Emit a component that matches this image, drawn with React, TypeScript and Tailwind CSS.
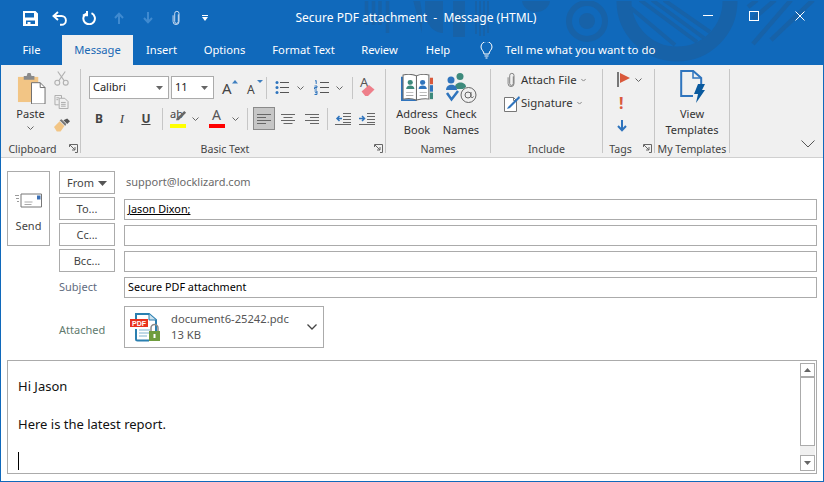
import React from "react";

const tabs = [
  { label: "File", w: "w-[61px]" },
  { label: "Message", w: "w-[71px]", active: true },
  { label: "Insert", w: "w-[57px]" },
  { label: "Options", w: "w-[69px]" },
  { label: "Format Text", w: "w-[89px]" },
  { label: "Review", w: "w-[63px]" },
  { label: "Help", w: "w-[54px]" },
];

function TitleDecor() {
  return (
    <svg className="absolute left-0 top-0 pointer-events-none" width="824" height="65" viewBox="0 0 824 65" fill="none" stroke="#1762a8">
      <g strokeWidth="3.500">
        <path d="M366.500 0v25M373.500 0v25M380 0v25M387.500 0v33" />
      </g>
      <path d="M413 0h7l2 12v21z" fill="#1762a8" stroke="none" />
      <path d="M425 0h18v33c-10 0-18-10-18-22z" fill="#1762a8" stroke="none" />
      <path d="M453 0h12v37h-12z" fill="#1762a8" stroke="none" />
      <g strokeWidth="2">
        <path d="M476 0v34M480 0v36M484 0v36M488 0v33" />
      </g>
      <path d="M522 0h28a14 12 0 0 1-28 0z" fill="#1762a8" stroke="none" />
      <circle cx="587" cy="21" r="18" strokeWidth="6" />
      <circle cx="587" cy="21" r="8" fill="#1762a8" stroke="none" />
      <circle cx="677" cy="1" r="53" strokeWidth="15" />
      <g strokeWidth="4">
        <path d="M631 8l44 37M640 0l57 42M652 0l52 38M664 0l46 32" />
      </g>
      <g strokeWidth="4.500">
        <path d="M757 0l-9 7M775 0l-22 19M791 0l-38 44M813 0l-42 40" />
      </g>
    </svg>
  );
}

function SaveIcon() {
  return (
    <svg width="15" height="15" viewBox="0 0 15 15">
      <path
        fillRule="evenodd"
        fill="#fff"
        d="M0 0h12.500L15 2.500V15H0zM2 2v4.500h9V2zM3 9.500V13h1.500V11h3v2H12V9.500z"
      />
    </svg>
  );
}

function UndoIcon() {
  return (
    <svg width="15" height="15" viewBox="0 0 15 15" fill="none" stroke="#fff" strokeWidth="1.900">
      <path d="M6 1L1.500 5 6 9" />
      <path d="M2 5h7.500a4.200 4.200 0 0 1 0 8.800H8" />
    </svg>
  );
}

function RedoIcon() {
  return (
    <svg width="14" height="14" viewBox="0 0 14 14" fill="none" stroke="#fff" strokeWidth="2">
      <path d="M9.500 2.200A5.800 5.800 0 1 1 4 2.600" />
      <path d="M5 0v4.200H0.800" />
    </svg>
  );
}

function ArrowIcon({ down, color = "#3f8ad0" }: { down?: boolean; color?: string }) {
  return (
    <svg width="10" height="12" viewBox="0 0 10 12" fill="none" stroke={color} strokeWidth="2" className={down ? "rotate-180" : ""}>
      <path d="M5 12V2M1 6l4-4.300L9 6" />
    </svg>
  );
}

function ClipIcon({ color = "#dbe7f5" }: { color?: string }) {
  return (
    <svg width="9" height="16" viewBox="0 0 10 16" fill="none" stroke={color} strokeWidth="1">
      <path d="M7 4v8a2 2 0 0 1-4 0V3a2.200 2.200 0 0 1 4.800 0v9a3.300 3.300 0 0 1-6.600 0V5" />
    </svg>
  );
}

function Chevron({ color = "#666", className = "" }: { color?: string; className?: string }) {
  return (
    <svg width="7" height="4" viewBox="0 0 7 4" fill="none" stroke={color} strokeWidth="1" className={className}>
      <path d="M0.500 0.500l3 3 3-3" />
    </svg>
  );
}

function PasteIcon() {
  return (
    <svg width="29" height="31" viewBox="0 0 30 32" className="ml-[2px]">
      <path d="M1 4h21v26H1z" fill="#f2c585" />
      <path d="M7 3h3l1-3h3l1 3h3v4H7z" fill="#8a8a8a" />
      <path d="M15 10h9l5 5v17H15z" fill="#fff" stroke="#6d6d6d" />
      <path d="M24 10v5h5" fill="none" stroke="#6d6d6d" />
    </svg>
  );
}

function ScissorsIcon() {
  return (
    <svg width="15" height="15" viewBox="0 0 16 16" fill="none" stroke="#b0b0b0" strokeWidth="1.200">
      <circle cx="3.500" cy="12.500" r="2.600" />
      <circle cx="12.500" cy="12.500" r="2.600" />
      <path d="M5 10.500L12 0.500M11 10.500L4 0.500" />
    </svg>
  );
}

function CopyIcon() {
  return (
    <svg width="15" height="14" viewBox="0 0 16 15" fill="none" stroke="#a8a8a8">
      <path d="M1 .5h7v3M1 .5v10h4" />
      <path d="M5.500 3.500h6l3.500 3.500v7.500H5.500z" fill="#f0f0f0" />
      <path d="M7.500 8h5M7.500 10h5M7.500 12h5M2.500 3h3M2.500 5h2" />
    </svg>
  );
}

function BrushIcon() {
  return (
    <svg width="16" height="14" viewBox="0 0 17 14">
      <path d="M0 9l6-6 5 5-4 6H3z" fill="#f2c585" />
      <path d="M6 2l2-1 5 5-1 2z" fill="#777" />
      <path d="M10 2l4-2 3 3-3 3z" fill="#555" />
    </svg>
  );
}

function GrowFontIcon({ shrink }: { shrink?: boolean }) {
  return (
    <div className="relative w-[16px] h-[16px]">
      <span className={`absolute left-0 bottom-0 leading-none text-[#444] ${shrink ? "text-[12px]" : "text-[15px]"}`}>A</span>
      <svg className="absolute right-0 top-0" width="6" height="4" viewBox="0 0 6 4" fill="#3f7fbf">
        <path d={shrink ? "M0 0h6L3 3z" : "M0 3.500h6L3 0z"} />
      </svg>
    </div>
  );
}

function BulletsIcon() {
  return (
    <svg width="14" height="15" viewBox="0 0 14 15" fill="none" stroke="#555">
      <path d="M5 2.500h9M5 7.500h9M5 12.500h9" />
      <g fill="#2f74bd" stroke="none">
        <circle cx="2" cy="2.500" r="1.500" />
        <circle cx="2" cy="7.500" r="1.500" />
        <circle cx="2" cy="12.500" r="1.500" />
      </g>
    </svg>
  );
}

function NumbersIcon() {
  return (
    <svg width="15" height="15" viewBox="0 0 15 15" fill="none" stroke="#555">
      <path d="M6 2.500h9M6 7.500h9M6 12.500h9" />
      <path d="M1 1l1.200-.5V4M.5 6h2.500v1.500H.5V9H3M.5 11h2.500v3.500H.5M1 12.700h2" stroke="#2f74bd" />
    </svg>
  );
}

function EraserIcon() {
  return (
    <div className="relative w-[16px] h-[18px]">
      <span className="absolute left-0 top-[-3px] text-[13px] leading-none text-[#555]">A</span>
      <svg className="absolute left-[1px] top-[5px]" width="15" height="12" viewBox="0 0 15 13">
        <path d="M0 8l8-7 6 5-7 7H4z" fill="#ee7f8a" />
      </svg>
    </div>
  );
}

function HighlightIcon() {
  return (
    <div className="relative w-[17px] h-[18px]">
      <span className="absolute left-0 top-[-2px] text-[11px] leading-none text-[#444]">ab</span>
      <svg className="absolute left-[5px] top-0" width="12" height="12" viewBox="0 0 13 13">
        <path d="M2 9l8-8 2 2-8 8H1z" fill="#666" />
      </svg>
      <div className="absolute left-0 bottom-0 w-[16px] h-[4px] bg-[#ffff00]" />
    </div>
  );
}

function FontColorIcon() {
  return (
    <div className="relative w-[16px] h-[18px]">
      <span className="absolute left-[3px] top-[-2px] text-[14px] leading-none text-[#555]">A</span>
      <div className="absolute left-0 bottom-0 w-[16px] h-[4px] bg-[#ff0000]" />
    </div>
  );
}

function AlignIcon({ mode }: { mode: "left" | "center" | "right" }) {
  const d = {
    left: "M0 .5h14M0 3.500h9M0 6.500h14M0 9.500h9",
    center: "M0 .5h14M2.500 3.500h9M0 6.500h14M2.500 9.500h9",
    right: "M0 .5h14M5 3.500h9M0 6.500h14M5 9.500h9",
  }[mode];
  return (
    <svg width="14" height="10" viewBox="0 0 14 10" fill="none" stroke="#666">
      <path d={d} />
    </svg>
  );
}

function IndentIcon({ out }: { out?: boolean }) {
  return (
    <svg width="16" height="12" viewBox="0 0 16 12" fill="none">
      <path d="M8 .5h8M8 3.500h8M8 6.500h8M8 9.500h8M0 11.500h16" stroke="#666" />
      <path d={out ? "M7 5.500H2M4.500 3L2 5.500 4.500 8" : "M0 5.500h5M3 3l2.500 2.500L3 8"} stroke="#2f74bd" strokeWidth="1.500" />
    </svg>
  );
}

function AddressBookIcon() {
  return (
    <svg width="32" height="27" viewBox="0 0 31 29" preserveAspectRatio="none">
      <path d="M0 3h3v24h12v2H0z" fill="#2f74bd" />
      <path d="M2 1c4-1 9-1 13 1v26c-4-2-9-2-13-1z" fill="#fff" stroke="#6d6d6d" />
      <path d="M15 2c4-2 8-2 12-1v26c-4-1-8 0-12 1z" fill="#fff" stroke="#6d6d6d" />
      <path d="M28 4h3v7h-3z" fill="#d9593b" />
      <path d="M28 12h3v7h-3z" fill="#2f74bd" />
      <path d="M28 20h3v7h-3z" fill="#3d8a7c" />
      <circle cx="9" cy="9" r="2.500" fill="#3d8a7c" />
      <path d="M5 16c0-5 8-5 8 0z" fill="#3d8a7c" />
      <circle cx="21" cy="9" r="2.500" fill="#2f74bd" />
      <path d="M17 16c0-5 8-5 8 0z" fill="#2f74bd" />
      <path d="M5 20h7M5 23h7M18 20h7M18 23h7" stroke="#aaa" />
    </svg>
  );
}

function CheckNamesIcon() {
  return (
    <svg width="32" height="31" viewBox="0 0 32 31" className="-mt-[1px] -mb-[3px]">
      <circle cx="15" cy="3.500" r="3.500" fill="#3d8a7c" />
      <path d="M10 14c0-6 11-6 11 0l-3 2h-6z" fill="#3d8a7c" />
      <circle cx="6" cy="7" r="3.500" fill="#2f74bd" />
      <path d="M1 17c0-7 11-7 11 0z" fill="#2f74bd" />
      <path d="M2 20l4.500 6.500L13 18" fill="none" stroke="#2f74bd" strokeWidth="2.500" />
      <circle cx="23.500" cy="22" r="7.500" fill="#f0f0f0" stroke="#666" />
      <circle cx="23" cy="22" r="3" fill="none" stroke="#666" />
      <path d="M26 19v4.500c0 1.500 2 1.500 2.500 0" fill="none" stroke="#666" />
    </svg>
  );
}

function SignatureIcon() {
  return (
    <svg width="16" height="17" viewBox="0 0 16 17" fill="none">
      <path d="M.5 2.500h9l3 3v11H.5z" fill="#fff" stroke="#777" />
      <path d="M9.500 2.500v3h3" stroke="#777" />
      <path d="M4 12l8-8 3-3 1 2-10 10-3 1z" fill="#2f74bd" />
    </svg>
  );
}

function FlagIcon() {
  return (
    <svg width="13" height="15" viewBox="0 0 13 15">
      <path d="M0 0h2v15H0z" fill="#777" />
      <path d="M3 1l10 5-10 5z" fill="#d9593b" />
    </svg>
  );
}

function TemplatesIcon() {
  return (
    <svg width="25" height="33" viewBox="0 0 25 33" fill="none">
      <path d="M13 26H1.200V1h12l8 7v7" stroke="#2f74bd" strokeWidth="2" />
      <path d="M13 1v7h8" stroke="#2f74bd" strokeWidth="1.500" />
      <path d="M18 14h7l-3 6h3l-9 13 2-9h-4z" fill="#0a5a9e" />
    </svg>
  );
}

function LauncherIcon() {
  return (
    <svg width="9" height="9" viewBox="0 0 9 9" fill="none" stroke="#666">
      <path d="M.5 3V.5H8.500V8.500H6" />
      <path d="M1 1l5 5M6 3v3H3" />
    </svg>
  );
}

function GroupLabel({ children, launcher }: { children: React.ReactNode; launcher?: boolean }) {
  return (
    <div className={`relative h-[14px] flex items-center justify-center text-[10.6px] leading-none text-[#444] whitespace-nowrap ${launcher ? "pr-[16px]" : ""}`}>
      {children}
      {launcher && (
        <span className="absolute right-[2px] top-[2px]">
          <LauncherIcon />
        </span>
      )}
    </div>
  );
}

function Group({ w, label, launcher, children }: { w: string; label: string; launcher?: boolean; children: React.ReactNode }) {
  return (
    <div className={`${w} h-[84px] border-r border-[#c6c6c6] flex flex-col shrink-0`}>
      <div className="flex-1 min-h-0">{children}</div>
      <div className="-mt-[3px] mb-[-3px]">
        <GroupLabel launcher={launcher}>{label}</GroupLabel>
      </div>
    </div>
  );
}

function Sep({ h = "h-[22px]" }: { h?: string }) {
  return <div className={`w-px ${h} bg-[#c6c6c6] shrink-0`} />;
}

function Ribbon() {
  return (
    <div className="h-[93px] bg-[#f0f0f0] border-b border-[#d0d0d0] pt-[4px] flex relative">
      <Group w="w-[80px]" label="Clipboard" launcher>
        <div className="flex">
          <div className="w-[53px] flex flex-col items-center pt-[4px] pl-[6px]">
            <PasteIcon />
            <div className="text-[11px] leading-none mt-[4px] text-[#333]">Paste</div>
            <Chevron className="mt-[7px]" />
          </div>
          <div className="flex flex-col items-start gap-[9px] pt-[2px]">
            <ScissorsIcon />
            <CopyIcon />
            <BrushIcon />
          </div>
        </div>
      </Group>

      <Group w="w-[305px]" label="Basic Text" launcher>
        <div className="pl-[8px] pt-[7px]">
          <div className="flex items-center h-[23px]">
            <div className="w-[80px] h-[23px] border border-[#ababab] bg-white flex items-center justify-between pl-[3px] pr-[5px]">
              <span className="text-[11px] text-[#222]">Calibri</span>
              <svg width="7" height="4" viewBox="0 0 7 4" fill="#666"><path d="M0 0h7L3.500 4z" /></svg>
            </div>
            <div className="w-[43px] h-[23px] ml-[2px] border border-[#ababab] bg-white flex items-center justify-between pl-[3px] pr-[5px]">
              <span className="text-[11px] text-[#222]">11</span>
              <svg width="7" height="4" viewBox="0 0 7 4" fill="#666"><path d="M0 0h7L3.500 4z" /></svg>
            </div>
            <div className="ml-[8px]"><GrowFontIcon /></div>
            <div className="ml-[9px]"><GrowFontIcon shrink /></div>
            <div className="ml-[3px]"><Sep /></div>
            <div className="ml-[8px]"><BulletsIcon /></div>
            <Chevron className="ml-[8px]" />
            <div className="ml-[10px]"><NumbersIcon /></div>
            <Chevron className="ml-[7px]" />
            <div className="ml-[9px]"><Sep /></div>
            <div className="ml-[7px]"><EraserIcon /></div>
          </div>
          <div className="flex items-center h-[23px] mt-[8px]">
            <span className="w-[22px] ml-[-1px] text-center font-bold text-[12px] text-[#444]">B</span>
            <span className="w-[24px] text-center italic text-[13px] text-[#444] font-['Liberation_Serif',serif]">I</span>
            <span className="w-[24px] text-center underline text-[12px] font-bold text-[#444]">U</span>
            <div className="ml-[4px]"><Sep /></div>
            <div className="ml-[7px]"><HighlightIcon /></div>
            <Chevron className="ml-[5px]" />
            <div className="ml-[10px]"><FontColorIcon /></div>
            <Chevron className="ml-[7px]" />
            <div className="ml-[8px]"><Sep /></div>
            <div className="ml-[5px] w-[22px] h-[23px] bg-[#c6c6c6] border border-[#8a8a8a] flex items-center justify-center"><AlignIcon mode="left" /></div>
            <div className="ml-[6px]"><AlignIcon mode="center" /></div>
            <div className="ml-[10px]"><AlignIcon mode="right" /></div>
            <div className="ml-[8px]"><Sep /></div>
            <div className="ml-[7px]"><IndentIcon out /></div>
            <div className="ml-[8px]"><IndentIcon /></div>
          </div>
        </div>
      </Group>

      <Group w="w-[105px]" label="Names">
        <div className="flex pt-[5px] pl-[7px] text-[11px] leading-[16px] text-[#333] text-center">
          <div className="w-[48px] flex flex-col items-center">
            <AddressBookIcon />
            <div className="mt-[5px]">Address<br />Book</div>
          </div>
          <div className="w-[40px] flex flex-col items-center">
            <CheckNamesIcon />
            <div className="mt-[5px]">Check<br />Names</div>
          </div>
        </div>
      </Group>

      <Group w="w-[112px]" label="Include">
        <div className="pl-[11px] text-[11.4px] text-[#333]">
          <div className="flex items-center h-[22px]">
            <span className="w-[19px] flex justify-center"><ClipIcon color="#777" /></span>
            <span>Attach File</span>
            <Chevron className="ml-[3px] scale-75" />
          </div>
          <div className="flex items-center h-[22px] mt-[1px]">
            <span className="w-[19px] flex justify-center"><SignatureIcon /></span>
            <span>Signature</span>
            <Chevron className="ml-[3px] scale-75" />
          </div>
        </div>
      </Group>

      <Group w="w-[52px]" label="Tags" launcher>
        <div className="flex flex-col pl-[14px] -mt-[1px]">
          <div className="flex items-center h-[23px]">
            <FlagIcon />
            <Chevron className="ml-[5px]" />
          </div>
          <div className="h-[23px] flex items-center pl-[2px] text-[16px] font-bold leading-none text-[#d9593b]">!</div>
          <div className="h-[23px] flex items-center"><ArrowIcon down color="#2f74bd" /></div>
        </div>
      </Group>

      <Group w="w-[75px]" label="My Templates">
        <div className="flex flex-col items-center pt-[1px] text-[11px] leading-[16px] text-[#333] text-center">
          <TemplatesIcon />
          <div className="mt-[3px]">View<br />Templates</div>
        </div>
      </Group>

      <div className="flex-1 flex items-end justify-end pr-[8px] pb-[9px]">
        <svg width="14" height="8" viewBox="0 0 14 8" fill="none" stroke="#555"><path d="M.5.5L7 7 13.500.5" /></svg>
      </div>
    </div>
  );
}

function AddrButton({ children }: { children: React.ReactNode }) {
  return (
    <div className="w-[56px] h-[23px] border border-[#ababab] flex items-center justify-center pt-[2px] text-[11px] text-[#444] gap-[4px] shrink-0">
      {children}
    </div>
  );
}

function FieldInput({ children }: { children?: React.ReactNode }) {
  return (
    <div className="flex-1 h-[21px] border border-[#ababab] flex items-center pl-[3px] text-[11px] text-[#111]">
      {children}
    </div>
  );
}

function PdfLockIcon() {
  return (
    <svg width="32" height="30" viewBox="0 0 32 30" fill="none">
      <path d="M6 7V2h13l7 6v12M6 17v10a1.500 1.500 0 0 0 1.500 1.500H19" stroke="#2a7fb0" strokeWidth="2" />
      <path d="M19 2v6h7" fill="#cfe3ef" stroke="#2a7fb0" />
      <path d="M0 7h18v8H0z" fill="#e8321f" />
      <text x="2" y="14" fontSize="7" fontWeight="700" fill="#fff" fontFamily="Liberation Sans, sans-serif">PDF</text>
      <path d="M9 18h11M9 21h11M9 24h8" stroke="#7fb2cf" />
      <path d="M21 19v-3a3.500 3.500 0 0 1 7 0v3" stroke="#8a8a8a" strokeWidth="1.500" />
      <path d="M19 19h11v10H19z" fill="#6f9d3e" />
      <path d="M23.500 22h2v4h-2z" fill="#fff" />
    </svg>
  );
}

function Compose() {
  return (
    <div className="flex pl-[6px] pr-[6px] pt-[13px]">
      <div className="w-[43px] h-[75px] border border-[#ababab] flex flex-col items-center pt-[21px] shrink-0">
        <svg width="27" height="15" viewBox="0 0 27 15" fill="none">
          <path d="M0 2.500h4M1 5.500h3M2 8.500h2" stroke="#9a9a9a" />
          <path d="M6 1h20.500v13H6z" fill="#fff" stroke="#777" />
          <path d="M9.500 9h8M9.500 11.500h7" stroke="#aaa" />
          <path d="M22 2.500h3.500v4H22z" fill="#3a6fb5" />
        </svg>
        <div className="mt-[12px] text-[11px] leading-none text-[#444]">Send</div>
      </div>
      <div className="flex-1 ml-[9px] min-w-0">
        <div className="flex items-center h-[23px]">
          <AddrButton>
            From
            <svg width="9" height="5" viewBox="0 0 9 5" fill="#555"><path d="M0 0h9L4.500 5z" /></svg>
          </AddrButton>
          <span className="ml-[11px] text-[11px] text-[#6a6a6a]">support@locklizard.com</span>
        </div>
        <div className="flex items-end mt-[3px]">
          <AddrButton>To...</AddrButton>
          <div className="w-[9px]" />
          <FieldInput>
            <span className="underline decoration-[#000] text-[10.8px] text-black">Jason Dixon;</span>
          </FieldInput>
        </div>
        <div className="flex items-end mt-[3px]">
          <AddrButton>Cc...</AddrButton>
          <div className="w-[9px]" />
          <FieldInput />
        </div>
        <div className="flex items-end mt-[3px]">
          <AddrButton>Bcc...</AddrButton>
          <div className="w-[9px]" />
          <FieldInput />
        </div>
        <div className="flex items-center mt-[5px]">
          <div className="w-[56px] shrink-0 text-[11px] text-[#5f6b7e]">Subject</div>
          <div className="w-[9px]" />
          <FieldInput><span className="text-[10.8px] text-black">Secure PDF attachment</span></FieldInput>
        </div>
        <div className="flex items-center mt-[8px]">
          <div className="w-[56px] shrink-0 text-[11px] text-[#5f7a6e] mt-[6px]">Attached</div>
          <div className="w-[9px]" />
          <div className="w-[200px] h-[42px] border border-[#ababab] flex items-center pl-[5px] pr-[6px]">
            <PdfLockIcon />
            <div className="ml-[9px] flex-1 text-[11.2px] leading-[16px] text-[#555]">
              <div>document6-25242.pdc</div>
              <div>13 KB</div>
            </div>
            <svg width="10" height="6" viewBox="0 0 10 6" fill="none" stroke="#444" strokeWidth="1.300"><path d="M.5.5L5 5 9.500.5" /></svg>
          </div>
        </div>
      </div>
    </div>
  );
}

function Body() {
  return (
    <div className="mx-[6px] mt-[12px] h-[114px] border border-[#ababab] flex">
      <div className="flex-1 pl-[10px] pt-[15px] text-[13px] leading-[20px] text-[#111]">
        <div>Hi Jason</div>
        <div className="mt-[18px]">Here is the latest report.</div>
        <div className="mt-[18px] w-px h-[18px] bg-black" />
      </div>
      <div className="w-[15px] mr-[1px] my-[2px] flex flex-col shrink-0">
        <div className="h-[14px] border border-[#ababab] flex items-center justify-center">
          <svg width="7" height="4" viewBox="0 0 7 4" fill="#666"><path d="M0 4h7L3.500 0z" /></svg>
        </div>
        <div className="flex-1 border border-[#ababab]" />
        <div className="h-[9px] bg-[#f0f0f0]" />
        <div className="h-[16px] border border-[#ababab] flex items-center justify-center">
          <svg width="7" height="4" viewBox="0 0 7 4" fill="#666"><path d="M0 0h7L3.500 4z" /></svg>
        </div>
      </div>
    </div>
  );
}

export default function App() {
  return (
    <div className="w-[824px] h-[482px] overflow-hidden bg-white border border-[#1069bb] font-['Noto_Sans',sans-serif]">
      <div className="-mx-px -mt-px bg-[#1069bb] relative h-[65px]">
        <TitleDecor />
        <div className="relative h-[35px] flex items-center text-white">
          <div className="absolute left-[23px] top-[10px] flex items-center">
            <SaveIcon />
            <div className="ml-[14px]"><UndoIcon /></div>
            <div className="ml-[15px]"><RedoIcon /></div>
            <div className="ml-[18px]"><ArrowIcon /></div>
            <div className="ml-[19px]"><ArrowIcon down /></div>
            <div className="ml-[19px]"><ClipIcon /></div>
            <div className="ml-[21px]">
              <svg width="6" height="6" viewBox="0 0 6 6" fill="#fff"><path d="M0 0h6v1H0zM0 2h6L3 6z" /></svg>
            </div>
          </div>
          <div className="w-full text-center text-[12px] pt-[1px] pl-[8px]">Secure PDF attachment&nbsp; -&nbsp; Message (HTML)</div>
          <div className="absolute right-[19px] top-[11px] flex items-center">
            <div className="w-[10px] h-px bg-white -mt-[2px]" />
            <div className="ml-[36px] w-[10px] h-[10px] border border-white" />
            <svg className="ml-[36px]" width="10" height="10" viewBox="0 0 10 10" fill="none" stroke="#fff"><path d="M.5.5l9 9M9.500.5l-9 9" /></svg>
          </div>
        </div>
        <div className="relative flex h-[30px] text-[11.2px] text-white pl-[1px]">
          {tabs.map((t) => (
            <div
              key={t.label}
              className={`${t.w} flex items-center justify-center ${t.active ? "bg-[#f0f0f0] text-[#1a69b5]" : ""}`}
            >
              {t.label}
            </div>
          ))}
          <svg className="ml-[15px] mt-[7px]" width="13" height="17" viewBox="0 0 13 17" fill="none" stroke="#fff">
            <path d="M4 12c0-3-3-4-3-7a5.500 5.500 0 0 1 11 0c0 3-3 4-3 7z" />
            <path d="M4.500 14h4M5.500 16h2" />
          </svg>
          <div className="ml-[12px] flex items-center text-[11.4px]">Tell me what you want to do</div>
        </div>
      </div>
      <Ribbon />
      <Compose />
      <Body />
    </div>
  );
}
